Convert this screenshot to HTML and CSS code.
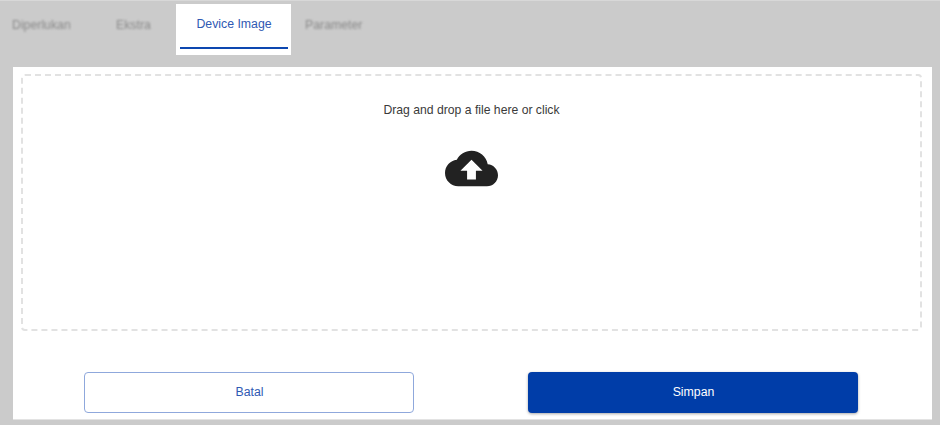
FILE: index.html
```html
<!DOCTYPE html>
<html lang="id">
<head>
<meta charset="utf-8">
<title>Device Image</title>
<link rel="stylesheet" href="styles.css">
</head>
<body>
<div class="page">
  <nav class="tabs">
    <div class="tab tab-first"><span class="tab-blur">Diperlukan</span></div>
    <div class="tab tab-second"><span class="tab-blur">Ekstra</span></div>
    <div class="tab-active"><span class="tab-active-label">Device Image</span></div>
    <div class="tab tab-last"><span class="tab-blur">Parameter</span></div>
  </nav>
  <main class="panel">
    <div class="dropzone">
      <p class="drop-text">Drag and drop a file here or click</p>
      <svg class="drop-icon" viewBox="0 0 24 24" aria-hidden="true"><path d="M19.35 10.04C18.67 6.59 15.64 4 12 4 9.11 4 6.6 5.64 5.35 8.04 2.34 8.36 0 10.91 0 14c0 3.31 2.69 6 6 6h13c2.76 0 5-2.24 5-5 0-2.64-2.05-4.78-4.65-4.96zM14 13v4h-4v-4H7l5-5 5 5h-3z"/></svg>
    </div>
    <div class="actions">
      <button class="btn btn-outline" type="button"><span class="btn-label">Batal</span></button>
      <button class="btn btn-solid" type="button"><span class="btn-label">Simpan</span></button>
    </div>
  </main>
</div>
</body>
</html>
```
FILE: styles.css
```css
html, body {
  margin: 0;
  padding: 0;
  height: 100%;
  overflow: hidden;
}
body {
  background: #cbcbcb;
  font-family: "Liberation Sans", Arial, sans-serif;
  font-size: 12.3px;
}
.page {
  width: 940px;
  height: 425px;
  box-sizing: border-box;
  padding: 4px 8px 0 13px;
  border-top: 1px solid #d8d8d8;
}
.tabs {
  display: flex;
  height: 51px;
  margin-top: -1px;
  margin-left: -1px;
}
.tab {
  height: 41px;
  display: flex;
  align-items: center;
  color: #8a8a8a;
}
.tab-first { width: 104px; }
.tab-second { width: 60px; }
.tab-last { padding-left: 14px; }
.tab-blur {
  filter: blur(1px);
}
.tab-active {
  width: 115px;
  height: 51px;
  box-sizing: border-box;
  background: #fff;
  padding: 0 3px 6px 4px;
}
.tab-active-label {
  display: flex;
  height: 45px;
  box-sizing: border-box;
  padding-bottom: 4px;
  align-items: center;
  justify-content: center;
  color: #3059b3;
  border-bottom: 2px solid #0d47b0;
}
.panel {
  margin-top: 12px;
  width: 919px;
  height: 353px;
  box-sizing: border-box;
  background: #fff;
  padding: 7px 10px 0 8px;
  border-bottom: 1px solid #e3e3e3;
}
.dropzone {
  height: 257px;
  box-sizing: border-box;
  border: 2px dashed #e2e2e2;
  border-radius: 4px;
  display: flex;
  flex-direction: column;
  align-items: center;
}
.drop-text {
  margin: 26px 0 0;
  color: #3a3a3a;
  font-size: 12.2px;
  line-height: 16px;
}
.drop-icon {
  display: block;
  width: 53px;
  height: 53px;
  margin-top: 24px;
  fill: #222;
}
.actions {
  display: flex;
  justify-content: space-between;
  margin: 41px 64px 0 63px;
}
.btn {
  width: 330px;
  height: 41px;
  border-radius: 4px;
  font-family: inherit;
  font-size: 12.3px;
  padding: 0 0 2px 1px;
}
.btn-outline {
  background: #fff;
  border: 1px solid #8fa8dc;
  color: #3059b3;
}
.btn-solid {
  background: #003da8;
  border: 0;
  color: #fff;
  box-shadow: 0 1px 3px rgba(0, 0, 0, 0.35);
}
```
